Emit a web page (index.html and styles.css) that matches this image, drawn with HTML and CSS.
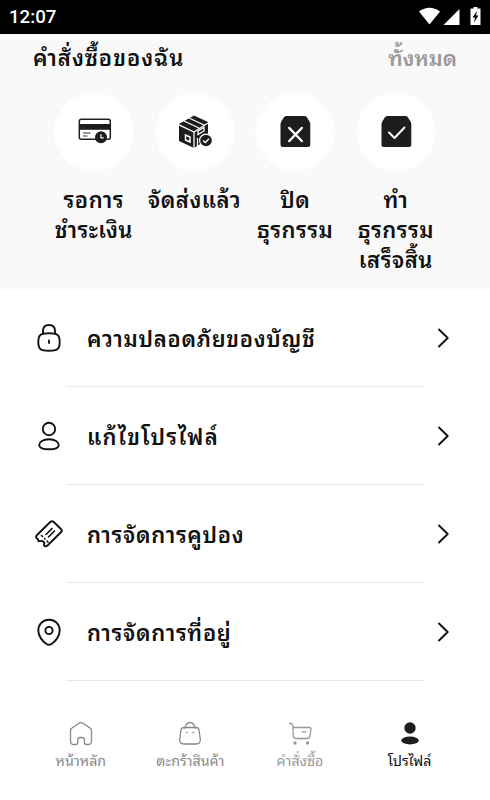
FILE: index.html
```html
<!DOCTYPE html>
<html lang="th">
<head>
    <meta charset="UTF-8">
    <meta name="viewport" content="width=device-width, initial-scale=1.0">
    <title>โปรไฟล์</title>
    <link rel="stylesheet" href="styles.css">
</head>
<body>
    <div class="status-bar">
        <span class="time">12:07</span>
        <svg class="status-icons" width="64" height="20" viewBox="0 0 64 20" fill="#fff">
            <path d="M0 4.500 Q10.500 -3 21 4.500 L10.500 17.500 Z"/>
            <path d="M40.500 2 V18 H24.500 Z"/>
            <path d="M54.500 1.500 V0 H58.500 V1.500 H61.500 V18 H51.500 V1.500 Z"/>
            <path d="M58 4 L53.500 10.500 H56 L55 15.500 L59.500 8.500 H57 Z" fill="#000"/>
        </svg>
    </div>

    <section class="orders">
        <div class="orders-header">
            <h2>คำสั่งซื้อของฉัน</h2>
            <a class="all">ทั้งหมด</a>
        </div>
        <div class="order-list">
            <div class="order-item">
                <div class="circle">
                    <svg width="36" height="36" viewBox="0 0 36 36">
                        <rect x="3.300" y="5.300" width="31" height="20" rx="2" fill="#fff" stroke="#222" stroke-width="1.500"/>
                        <path d="M3 10 H34.500 V15.800 H3 Z" fill="#1d1d1d"/>
                        <path d="M7 19 H14.500 M7 22 H11.500" stroke="#333" stroke-width="1"/>
                        <circle cx="25" cy="23.300" r="6" fill="#1d1d1d"/>
                        <path d="M25 20.300 V23.800 H27.700" fill="none" stroke="#fff" stroke-width="1.200"/>
                    </svg>
                </div>
                <span>รอการ<br>ชำระเงิน</span>
            </div>
            <div class="order-item">
                <div class="circle">
                    <svg width="36" height="36" viewBox="0 0 36 36">
                        <path d="M2 10 L17 1.500 L31 8 V25 L17 34 L2 27 Z" fill="#1d1d1d"/>
                        <path d="M2 10.800 L17 18 L31 9 M17 18 V35 M7 7 L22 14 M12 4 L27 11" fill="none" stroke="#fff" stroke-width="1.300"/>
                        <path d="M8.500 21 L13 23 V28 L8.500 26 Z" fill="none" stroke="#fff" stroke-width="1.500"/>
                        <path d="M21 17 L27 13.500 V17 L21 20.500 Z" fill="none" stroke="#fff" stroke-width="1.300"/>
                        <path d="M20.500 24 V32" stroke="#fff" stroke-width="1.300"/>
                        <circle cx="29" cy="26.500" r="6.400" fill="#1d1d1d" stroke="#fff" stroke-width="1.200"/>
                        <path d="M26 26.500 L28.300 28.500 L32 24.800" fill="none" stroke="#fff" stroke-width="1.300"/>
                    </svg>
                </div>
                <span>จัดส่งแล้ว</span>
            </div>
            <div class="order-item">
                <div class="circle">
                    <svg width="36" height="36" viewBox="0 0 36 36">
                        <path d="M9.500 2 H27.500 Q29 2 29.800 3.200 L32.500 7.500 Q33.300 9 33.300 10.500 V30.500 Q33.300 33 30.800 33 H6 Q3.500 33 3.500 30.500 V10.500 Q3.500 9 4.300 7.500 L7 3.200 Q8 2 9.500 2 Z" fill="#1d1d1d"/>
                        <path d="M12.300 14 L24.800 27 M24.800 14 L12.300 27" stroke="#fff" stroke-width="2.500" stroke-linecap="round"/>
                    </svg>
                </div>
                <span>ปิด<br>ธุรกรรม</span>
            </div>
            <div class="order-item">
                <div class="circle">
                    <svg width="36" height="36" viewBox="0 0 36 36">
                        <path d="M9.500 2 H27.500 Q29 2 29.800 3.200 L32.500 7.500 Q33.300 9 33.300 10.500 V30.500 Q33.300 33 30.800 33 H6 Q3.500 33 3.500 30.500 V10.500 Q3.500 9 4.300 7.500 L7 3.200 Q8 2 9.500 2 Z" fill="#1d1d1d"/>
                        <path d="M11 18.500 L16.500 24 L26.500 13.500" fill="none" stroke="#fff" stroke-width="2" stroke-linecap="round" stroke-linejoin="round"/>
                    </svg>
                </div>
                <span>ทำ<br>ธุรกรรม<br>เสร็จสิ้น</span>
            </div>
        </div>
    </section>

    <main class="menu">
        <div class="menu-item">
            <svg class="icon" width="30" height="30" viewBox="0 0 30 30">
                <path d="M9 10.500 V8 Q9 2 15 2 Q21 2 21 8 V10.500"/>
                <path d="M15 10.200 C23 10.200 25.700 11.500 25.700 19 C25.700 26.500 23 27.700 15 27.700 C7 27.700 4.300 26.500 4.300 19 C4.300 11.500 7 10.200 15 10.200 Z"/>
                <path d="M15 17.500 V20"/>
            </svg>
            <span>ความปลอดภัยของบัญชี</span>
            <svg class="arrow" width="14" height="22" viewBox="0 0 14 22"><path d="M2 2.500 L10.700 11 L2 19.500"/></svg>
        </div>
        <div class="menu-item">
            <svg class="icon" width="30" height="30" viewBox="0 0 30 30">
                <circle cx="15" cy="8" r="6.200"/>
                <path d="M15 18.300 C21 18.300 24.800 20.800 24.800 24 C24.800 27.300 21 28.300 15 28.300 C9 28.300 5.200 27.300 5.200 24 C5.200 20.800 9 18.300 15 18.300 Z"/>
            </svg>
            <span class="wide">แก้ไขโปรไฟล์</span>
            <svg class="arrow" width="14" height="22" viewBox="0 0 14 22"><path d="M2 2.500 L10.700 11 L2 19.500"/></svg>
        </div>
        <div class="menu-item">
            <svg class="icon" width="30" height="30" viewBox="0 0 30 30">
                <path d="M16.500 2.800 Q18 1.500 19.500 2.800 L27.200 10.300 Q28.500 11.700 27.200 13 L13.500 26.500 Q11.500 28 10 26.500 Q11 23.500 9 22.300 Q7.500 21.500 4.500 22.300 Q4.500 20 2.800 19.300 Q1.300 18 2.800 16.300 Z"/>
                <path d="M7.500 16.500 L8.500 17.500 M10.500 19.500 L11 20 M13 22 L14 23 M12 15.500 L18 9.500 M14.500 18 L20.500 12" stroke-width="1.600"/>
            </svg>
            <span>การจัดการคูปอง</span>
            <svg class="arrow" width="14" height="22" viewBox="0 0 14 22"><path d="M2 2.500 L10.700 11 L2 19.500"/></svg>
        </div>
        <div class="menu-item">
            <svg class="icon" width="30" height="30" viewBox="0 0 30 30">
                <path d="M15 2.800 C21.500 2.800 25.700 7.500 25.700 13.500 C25.700 19 21.500 24.500 17.500 27 Q15 28.600 12.500 27 C8.500 24.500 4.300 19 4.300 13.500 C4.300 7.500 8.500 2.800 15 2.800 Z"/>
                <circle cx="15" cy="13.500" r="3.600"/>
            </svg>
            <span>การจัดการที่อยู่</span>
            <svg class="arrow" width="14" height="22" viewBox="0 0 14 22"><path d="M2 2.500 L10.700 11 L2 19.500"/></svg>
        </div>
    </main>

    <nav class="tab-bar">
        <a class="tab">
            <svg width="28" height="28" viewBox="0 0 28 28"><path d="M3.500 10.500 Q3.500 9 5 8 L12 3.200 Q14 2 16 3.200 L23 8 Q24.500 9 24.500 10.500 V21 Q24.500 24.500 21 24.500 H19.500 Q17.500 24.500 17.500 22.500 V20 Q17.500 17.500 15 17.500 H13 Q10.800 17.500 10.800 20 V22.500 Q10.800 24.500 8.800 24.500 H7 Q3.500 24.500 3.500 21 Z"/></svg>
            <span>หน้าหลัก</span>
        </a>
        <a class="tab">
            <svg width="28" height="28" viewBox="0 0 28 28"><path d="M9 8 Q10 2.500 14 2.500 Q18 2.500 19 8"/><path d="M8 7.500 H20 Q22.500 7.500 23 10 L24.300 19 Q24.700 24 20 24 H8 Q3.300 24 3.700 19 L5 10 Q5.500 7.500 8 7.500 Z"/><path d="M10.800 12.500 H11 M17.200 12.500 H17.400" stroke-width="1.600"/></svg>
            <span>ตะกร้าสินค้า</span>
        </a>
        <a class="tab light">
            <svg width="28" height="28" viewBox="0 0 28 28"><path d="M3.500 3.500 H5 Q6.700 3.500 6.800 5.500 L7.300 16 Q7.500 18.500 9.800 18.500 H21.500 Q23.300 18.500 23.700 16.500 L25 9.500 Q25.200 7.500 23.500 7.500 H7 M16 11.800 H19.800"/><circle cx="9" cy="23" r="1" fill="#999"/><circle cx="21.500" cy="23" r="1" fill="#999"/></svg>
            <span>คำสั่งซื้อ</span>
        </a>
        <a class="tab active">
            <svg width="28" height="28" viewBox="0 0 28 28"><circle cx="14" cy="8" r="5.700"/><ellipse cx="14" cy="20.500" rx="8.800" ry="3.900"/></svg>
            <span>โปรไฟล์</span>
        </a>
    </nav>
</body>
</html>
```
FILE: styles.css
```css
* {
    box-sizing: border-box;
}
body {
    margin: 0;
    height: 800px;
    display: flex;
    flex-direction: column;
    overflow: hidden;
    background-color: #fff;
    color: #111;
    font-family: Roboto, Waree, "Noto Sans Thai Looped", monospace;
}
.status-bar {
    height: 34px;
    background-color: #000;
    color: #fff;
    display: flex;
    align-items: center;
    justify-content: space-between;
    padding: 0 7px 0 9px;
}
.time {
    font: 500 18.700px Roboto, sans-serif;
}
.orders {
    height: 255px;
    background-color: #f9f9f9;
}
.orders-header {
    display: flex;
    justify-content: space-between;
    padding: 10px 33px 0;
    font-size: 22px;
    font-weight: 600;
    line-height: 30px;
}
h2 {
    margin: 0;
    font: inherit;
    letter-spacing: 1px;
}
.all {
    color: #999;
    font-size: 21.500px;
}
.order-list {
    display: grid;
    grid-template-columns: repeat(4, 100.700px);
    padding: 17px 0 0 43.500px;
}
.order-item {
    display: flex;
    flex-direction: column;
    align-items: center;
    gap: 13px;
    text-align: center;
    font-size: 22px;
    font-weight: 600;
    letter-spacing: 0.500px;
    line-height: 30px;
    white-space: nowrap;
}
.circle {
    width: 82px;
    height: 82px;
    border: 3px solid #fcfcfc;
    outline: 1px solid #f6f6f6;
    border-radius: 50%;
    background-color: #fff;
    display: flex;
    align-items: center;
    justify-content: center;
}
.menu {
    height: 411px;
}
.menu-item {
    height: 98px;
    display: flex;
    align-items: center;
    padding: 0 39px 0 34px;
    background: linear-gradient(#e8e8e8, #e8e8e8) 66px 97px / 358px 1px no-repeat;
}
.menu-item span {
    flex: 1;
    padding: 4px 0 0 23px;
    font-size: 22px;
    font-weight: 600;
    letter-spacing: 0.700px;
    line-height: 30px;
}
.menu-item .wide {
    letter-spacing: 1.300px;
}
.icon, .arrow {
    fill: none;
    stroke: #111;
    stroke-width: 1.900;
    stroke-linecap: round;
    stroke-linejoin: round;
}
.tab-bar {
    display: grid;
    grid-template-columns: repeat(4, 109.600px);
    padding: 20px 0 0 26px;
}
.tab {
    display: flex;
    flex-direction: column;
    align-items: center;
    font-size: 14.200px;
    line-height: 26px;
    color: #888;
}
.tab svg {
    fill: none;
    stroke: #888;
    stroke-width: 1.300;
    stroke-linecap: round;
}
.tab.light {
    color: #999;
}
.tab.light svg {
    stroke: #999;
}
.tab.active {
    color: #111;
}
.tab.active svg {
    fill: #1d1d1d;
    stroke: none;
}
```
